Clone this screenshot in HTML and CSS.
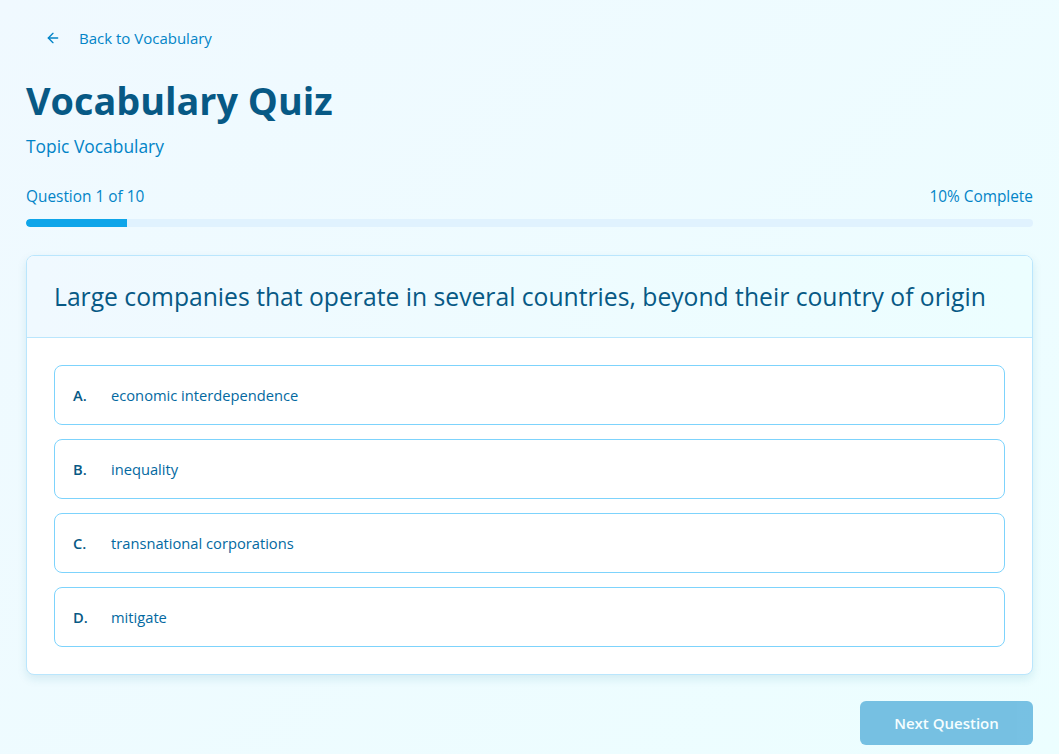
FILE: index.html
```html
<!DOCTYPE html>
<html lang="en">
<head>
<meta charset="utf-8">
<title>Vocabulary Quiz</title>
<link rel="stylesheet" href="styles.css">
</head>
<body>
<div class="page">
  <a class="back" href="#">
    <span class="back-icon">
      <svg width="16" height="16" viewBox="0 0 24 24" fill="none" stroke="currentColor" stroke-width="2" stroke-linecap="round" stroke-linejoin="round"><path d="M19 12H5"/><path d="M12 19l-7-7 7-7"/></svg>
    </span>
    <span>Back to Vocabulary</span>
  </a>
  <h1 class="title">Vocabulary Quiz</h1>
  <p class="subtitle">Topic Vocabulary</p>

  <div class="progress-info">
    <span>Question 1 of 10</span>
    <span>10% Complete</span>
  </div>
  <div class="progress-track"><div class="progress-fill" style="width:10%"></div></div>

  <div class="card">
    <div class="card-header">
      <h2 class="question">Large companies that operate in several countries, beyond their country of origin</h2>
    </div>
    <div class="options">
      <button class="option"><span class="opt-label">A.</span><span class="opt-text">economic interdependence</span></button>
      <button class="option"><span class="opt-label">B.</span><span class="opt-text">inequality</span></button>
      <button class="option"><span class="opt-label">C.</span><span class="opt-text">transnational corporations</span></button>
      <button class="option"><span class="opt-label">D.</span><span class="opt-text">mitigate</span></button>
    </div>
  </div>

  <div class="actions">
    <button class="next" disabled>Next Question</button>
  </div>
</div>
</body>
</html>
```

FILE: styles.css
```css
* { box-sizing: border-box; }
html, body { margin: 0; padding: 0; }
body {
  font-family: "Open Sans", "Lato", sans-serif;
  background: linear-gradient(135deg, #f0f9ff 0%, #ecfeff 100%);
  min-height: 754px;
  color: #075985;
}
.page {
  padding: 20px 26px 8px 26px;
}
.back {
  display: inline-flex;
  align-items: center;
  height: 36px;
  gap: 18px;
  padding: 0 12px 0 19px;
  color: #0284c7;
  text-decoration: none;
  font-size: 15px;
}
.back-icon { display: flex; width: 16px; height: 16px; }
.title {
  margin: 25px 0 0 0;
  font-size: 37.8px;
  line-height: 40px;
  font-weight: 700;
  color: #075985;
}
.subtitle {
  margin: 11px 0 0 0;
  font-size: 17.4px;
  line-height: 28px;
  color: #0284c7;
}
.progress-info {
  margin-top: 27px;
  display: flex;
  justify-content: space-between;
  font-size: 15.4px;
  line-height: 20px;
  color: #0284c7;
}
.progress-track {
  margin-top: 12px;
  height: 8px;
  border-radius: 4px;
  background: #e0f2fe;
  overflow: hidden;
}
.progress-fill {
  height: 100%;
  background: #0ea5e9;
  border-radius: 4px 0 0 4px;
}
.card {
  margin-top: 28px;
  background: #fff;
  border: 1px solid #bae6fd;
  border-radius: 8px;
  box-shadow: 0 4px 10px rgba(14, 116, 144, 0.12);
  overflow: hidden;
}
.card-header {
  padding: 25px 28px 24px 27px;
  background: linear-gradient(90deg, #f0f9ff 0%, #ecfeff 100%);
  border-bottom: 1px solid #bae6fd;
}
.question {
  margin: 0;
  font-size: 24.7px;
  line-height: 32px;
  font-weight: 500;
  color: #075985;
}
.options {
  padding: 27px 27px 27px 27px;
  display: flex;
  flex-direction: column;
  gap: 14px;
}
.option {
  display: flex;
  align-items: center;
  width: 100%;
  height: 60px;
  padding: 0 18px;
  background: #fff;
  border: 1px solid #7dd3fc;
  border-radius: 8px;
  font-family: inherit;
  text-align: left;
  cursor: pointer;
}
.opt-label {
  width: 38px;
  font-size: 14.7px;
  font-weight: 600;
  color: #075985;
}
.opt-text {
  font-size: 14.7px;
  color: #0369a1;
}
.actions {
  margin-top: 26px;
  display: flex;
  justify-content: flex-end;
}
.next {
  height: 44px;
  width: 173px;
  border: none;
  border-radius: 6px;
  background: #0284c7;
  color: #fff;
  opacity: 0.5;
  font-family: inherit;
  font-size: 15px;
  font-weight: 600;
}
```
